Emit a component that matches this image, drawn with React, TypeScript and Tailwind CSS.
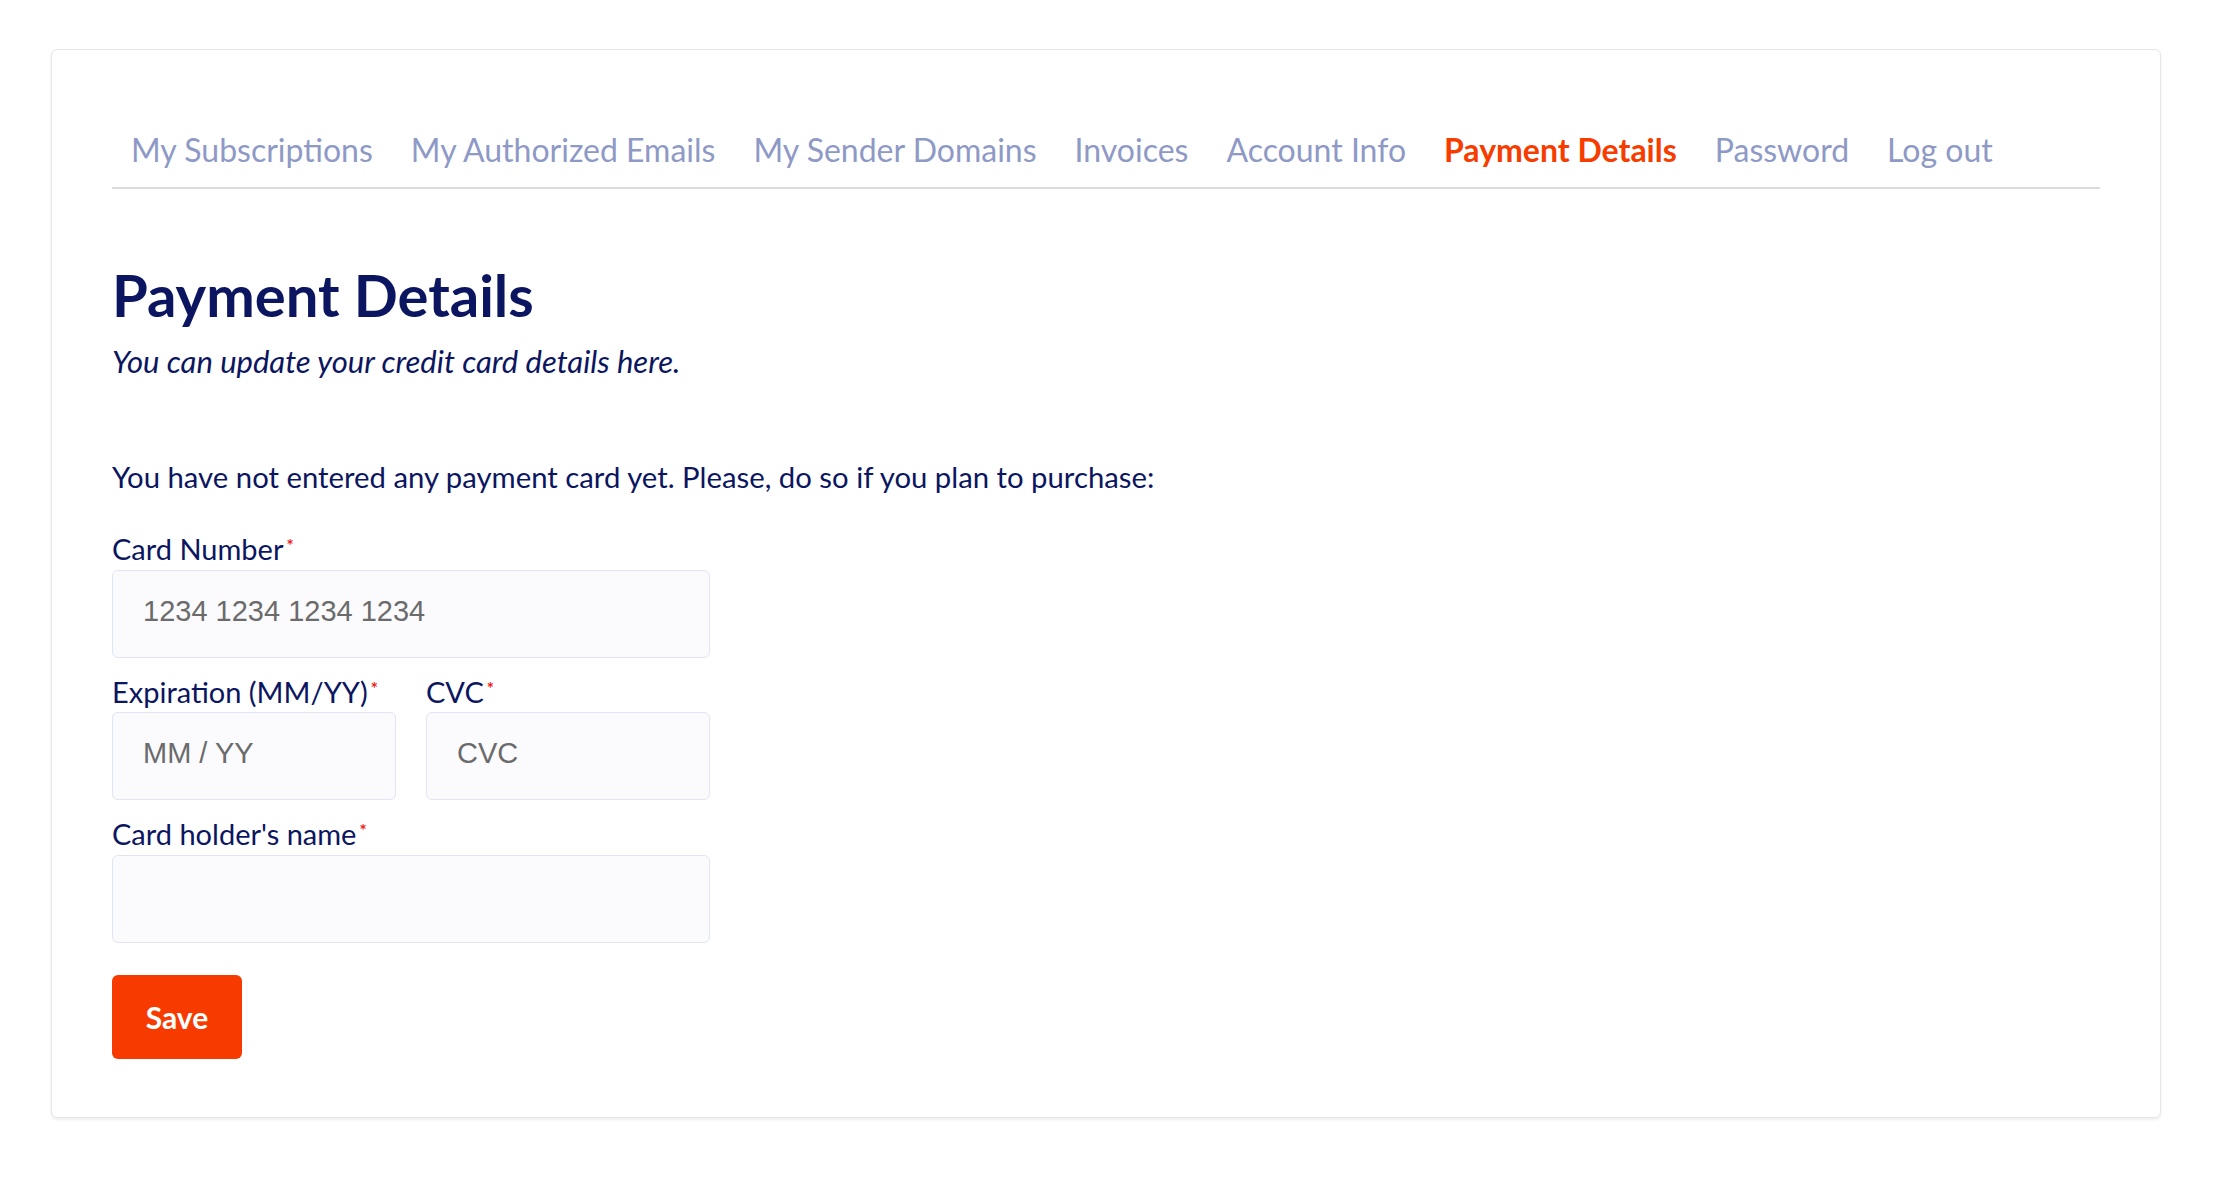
import { useState } from 'react'

const tabs = [
  'My Subscriptions',
  'My Authorized Emails',
  'My Sender Domains',
  'Invoices',
  'Account Info',
  'Payment Details',
  'Password',
  'Log out',
]

function Label({ children }: { children: React.ReactNode }) {
  return (
    <label className="flex items-start text-[29px] leading-[36px] text-[#0c1660]">
      {children}
      <span className="ml-[3px] mt-[7px] text-[17px] leading-[15px] font-bold text-[#ec2020]">*</span>
    </label>
  )
}

function Field({ placeholder, className = '' }: { placeholder?: string; className?: string }) {
  return (
    <input
      placeholder={placeholder}
      className={`h-[88px] rounded-[6px] border border-[#e1e4f4] bg-[#fbfbfe] px-[30px] pb-[6px] text-[29px] text-[#333] placeholder:text-[#6b6b6b] outline-none [font-family:'Liberation_Sans',Arial,sans-serif] ${className}`}
    />
  )
}

export default function App() {
  const [active] = useState('Payment Details')

  return (
    <div className="min-h-screen bg-white pt-[49px] px-[51px] [font-family:Lato,'Open_Sans',sans-serif]">
      <div className="w-[2110px] rounded-[6px] border border-[#e6e6e6] shadow-[0_2px_3px_rgba(0,0,0,0.07)] px-[60px] pt-[82px] pb-[58px]">
        {/* Tabs */}
        <nav className="flex border-b-2 border-[#dcdcdc]">
          {tabs.map((t) => (
            <a
              key={t}
              href="#"
              className={`px-[19px] pb-[19px] text-[32px] leading-[36px] ${
                t === active ? 'font-bold text-[#f73c00]' : 'text-[#8e99c6]'
              }`}
            >
              {t}
            </a>
          ))}
        </nav>

        {/* Heading */}
        <h1 className="mt-[78px] text-[58px] leading-[56px] font-bold text-[#0c1660]">Payment Details</h1>
        <p className="mt-[20px] text-[31px] leading-[36px] italic text-[#0c1660]">
          You can update your credit card details here.
        </p>

        <p className="mt-[80px] text-[29.3px] leading-[36px] text-[#0c1660]">
          You have not entered any payment card yet. Please, do so if you plan to purchase:
        </p>

        {/* Form */}
        <form className="mt-[36px] w-[598px]" onSubmit={(e) => e.preventDefault()}>
          <Label>Card Number</Label>
          <Field placeholder="1234 1234 1234 1234" className="mt-[3px] w-full" />

          <div className="mt-[16px] grid grid-cols-2 gap-x-[30px]">
            <div className="flex flex-col">
              <Label>Expiration (MM/YY)</Label>
              <Field placeholder="MM / YY" className="mt-[2px] w-full" />
            </div>
            <div className="flex flex-col">
              <Label>CVC</Label>
              <Field placeholder="CVC" className="mt-[2px] w-full" />
            </div>
          </div>

          <div className="mt-[16px]">
            <Label>Card holder's name</Label>
            <Field className="mt-[3px] w-full" />
          </div>

          <button
            type="submit"
            className="mt-[32px] h-[84px] w-[130px] rounded-[6px] bg-[#f73b00] text-[30px] font-bold text-white"
          >
            Save
          </button>
        </form>
      </div>
    </div>
  )
}
